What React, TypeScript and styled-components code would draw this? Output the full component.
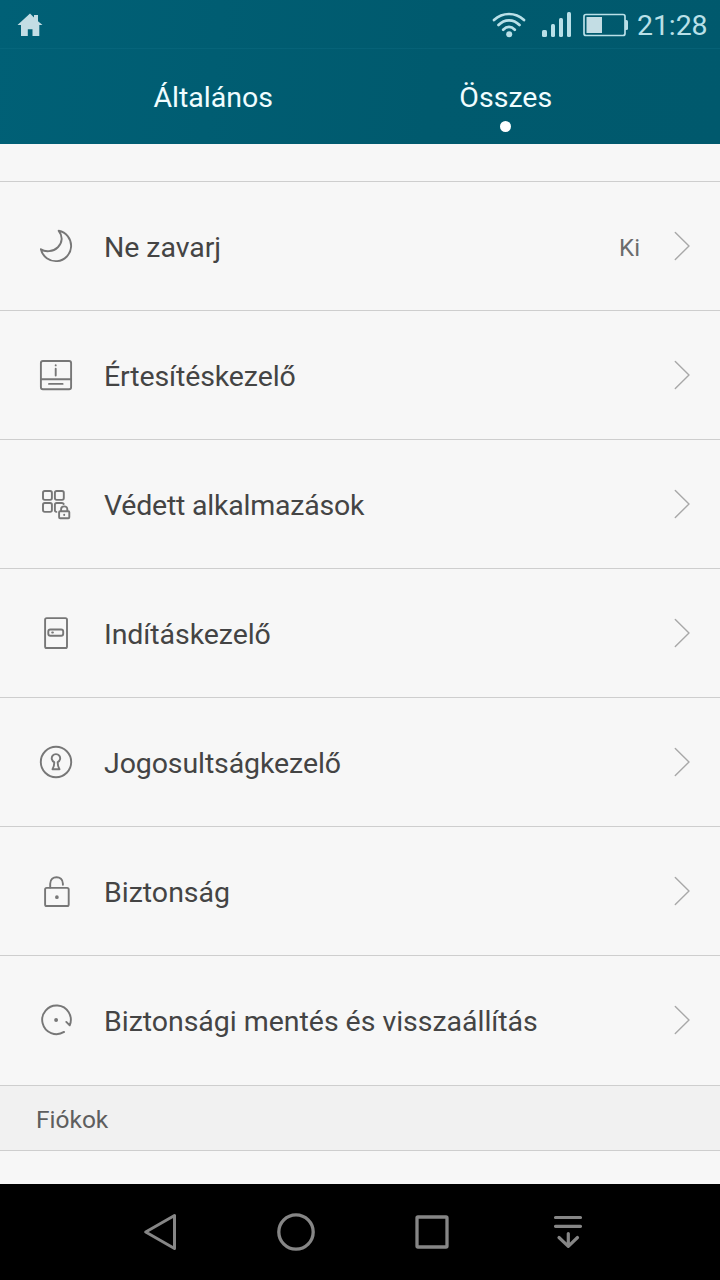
import React from "react";
import styled, { createGlobalStyle } from "styled-components";

const GlobalStyle = createGlobalStyle`
  * { box-sizing: border-box; }
  body { margin: 0; background: #f7f7f7; font-family: Roboto, "Liberation Sans", sans-serif; }
`;

const Screen = styled.div`
  width: 720px;
  height: 1280px;
  display: flex;
  flex-direction: column;
  overflow: hidden;
  background: #f7f7f7;
`;

const Header = styled.header`
  height: 144px;
  flex: none;
  background: linear-gradient(97deg, #006076 0%, #005a6e 60%, #00596d 100%);
`;

const StatusBar = styled.div`
  height: 49px;
  display: flex;
  align-items: center;
  justify-content: space-between;
  padding: 1px 12px 0 17px;
  border-bottom: 1px solid rgba(20, 115, 138, 0.3);
  color: #b9e0e8;
`;

const StatusIcons = styled.div`
  display: flex;
  align-items: center;
`;

const Clock = styled.span`
  width: 71px;
  margin-left: 8px;
  font-size: 28.5px;
  line-height: 34px;
  letter-spacing: -0.1px;
  white-space: nowrap;
  padding-top: 2px;
`;

const Tabs = styled.nav`
  height: 95px;
  display: flex;
  padding: 0 68px;
`;

const Tab = styled.div<{ $shift: number }>`
  flex: 1;
  display: flex;
  flex-direction: column;
  align-items: center;
  padding-top: 32px;
  margin-left: ${(p) => p.$shift}px;
  color: #f0fdff;
`;

const TabLabel = styled.span`
  font-size: 28.5px;
  line-height: 34px;
`;

const Dot = styled.i`
  width: 11px;
  height: 11px;
  margin-top: 6px;
  border-radius: 50%;
  background: #fff;
`;

const List = styled.main`
  flex: 1;
  padding-top: 37px;
`;

const Row = styled.div<{ $extra?: number }>`
  height: ${(p) => 129 + (p.$extra ?? 0)}px;
  border-top: 1px solid #cecece;
  display: flex;
  align-items: center;
  padding: 0 30px ${(p) => p.$extra ?? 0}px 36px;
`;

const Label = styled.span<{ $spacing: number }>`
  flex: 1;
  margin-left: 28px;
  padding-top: 3px;
  font-size: 28.5px;
  line-height: 34px;
  letter-spacing: ${(p) => p.$spacing}px;
  color: #444;
`;

const Value = styled.span`
  margin-right: 34px;
  padding-top: 4px;
  font-size: 24px;
  line-height: 30px;
  color: #6c6c6c;
`;

const SectionTitle = styled.div`
  height: 66px;
  display: flex;
  align-items: center;
  padding: 2px 36px 0;
  border-top: 1px solid #cecece;
  border-bottom: 1px solid #cecece;
  background: #f1f1f1;
  color: #5e5e5e;
  font-size: 24.5px;
`;

const NavBar = styled.footer`
  height: 96px;
  flex: none;
  display: flex;
  align-items: center;
  justify-content: center;
  gap: 88px;
  padding-left: 8px;
  background: #000;
`;

const Glyph = styled.svg`
  display: block;
  flex: none;
  fill: none;
  stroke: #777;
  stroke-width: 1.9;
  stroke-linecap: round;
  stroke-linejoin: round;
`;

const ChevronGlyph = styled(Glyph)`
  stroke: #a8a8a8;
  stroke-width: 1.4;
`;

const NavGlyph = styled(Glyph)`
  stroke: #868686;
  stroke-width: 3.3;
`;

const StatusGlyph = styled(Glyph)`
  stroke: #b9e0e8;
`;

const SignalGlyph = styled.svg`
  margin-left: 16px;
  fill: #b9e0e8;
`;

const BatteryGlyph = styled.svg`
  margin-left: 11px;
`;

const icons = {
  moon: <path d="M22.7 4.8A15.3 15.3 0 1 1 4.9 23.2C9 26.2 17 26 21.900 21.200C26.500 16.700 27 10 22.700 4.800Z" />,
  notice: (
    <>
      <rect x="4.900" y="6" width="30.200" height="28.200" rx="2" />
      <path d="M5 24.300H35M13 28.900H26.600M19.700 13.800V20.600M19.700 10.300V10.400" />
    </>
  ),
  apps: (
    <>
      <rect x="7" y="7" width="8.900" height="8.900" rx="1.800" />
      <rect x="18.900" y="7" width="8.900" height="8.900" rx="1.800" />
      <rect x="7" y="19" width="8.900" height="8.900" rx="1.800" />
      <path d="M20.400 27.900Q18.900 27.900 18.900 26.100V20.800Q18.900 19 20.700 19H26Q27.200 19 27.700 20" />
      <rect x="23.100" y="27.300" width="10.200" height="7" rx="1" />
      <path d="M25.100 27V25.200Q25.100 22.400 28.200 22.400T31.300 25.200V27M28.200 30.600V31" />
    </>
  ),
  startup: (
    <>
      <rect x="9.100" y="5.100" width="21.900" height="29.900" rx="1.600" />
      <rect x="12.300" y="16.500" width="14.900" height="6.300" rx="2" />
      <path d="M16.200 19.600H16.900" strokeWidth="2" />
    </>
  ),
  keyhole: (
    <>
      <circle cx="20" cy="20" r="15.200" />
      <path d="M18.200 20.100A4.200 4.200 0 1 1 21.700 20.100Q21.500 24 23.500 27.200H16.500Q18.500 24 18.200 20.100Z" />
    </>
  ),
  lock: (
    <>
      <rect x="9.100" y="16.900" width="23.600" height="18.100" rx="1.600" />
      <path d="M14.200 16.500V12.700C14.200 4 26.900 4 26.900 12.700V13.700" />
      <circle cx="20.900" cy="26.200" r="0.900" fill="#777" />
    </>
  ),
  backup: (
    <>
      <path d="M28.100 31.900A14.300 14.300 0 1 1 33.700 25.300L30.300 21.900M33.700 25.300L34.600 22.800" />
      <circle cx="20.100" cy="20" r="1" fill="#777" />
    </>
  ),
};

type Item = { icon: keyof typeof icons; label: string; spacing: number; value?: string; extra?: number };

const items: Item[] = [
  { icon: "moon", label: "Ne zavarj", spacing: -0.05, value: "Ki" },
  { icon: "notice", label: "Értesítéskezelő", spacing: -0.12 },
  { icon: "apps", label: "Védett alkalmazások", spacing: -0.22 },
  { icon: "startup", label: "Indításkezelő", spacing: -0.07 },
  { icon: "keyhole", label: "Jogosultságkezelő", spacing: -0.1 },
  { icon: "lock", label: "Biztonság", spacing: 0 },
  { icon: "backup", label: "Biztonsági mentés és visszaállítás", spacing: -0.03, extra: 1 },
];

const Chevron = () => (
  <ChevronGlyph width="16" height="30" viewBox="0 0 16 30">
    <path d="M1.300 1.500L15 15L1.300 28.500" />
  </ChevronGlyph>
);

export default function App() {
  return (
    <>
      <GlobalStyle />
      <Screen>
        <Header>
          <StatusBar>
            <svg width="26" height="24" viewBox="0 0 26 24" fill="#c3dde4">
              <path d="M13 .5L17 4.400V2H21V8.200L25.500 12H22.300V23H15.500V16.300H10.800V23H4V12H.5Z" />
            </svg>
            <StatusIcons>
              <StatusGlyph width="34" height="28" viewBox="0 0 34 28">
                <g strokeWidth="2.700">
                  <path d="M2 9Q8.500 3 17 3T32 9M6.500 14Q11 9.300 17 9.300T27.500 14M11.200 18.700Q14 15.900 17 15.900T22.800 18.700" />
                </g>
                <circle cx="17.200" cy="23.300" r="3" fill="#b9e0e8" stroke="none" />
              </StatusGlyph>
              <SignalGlyph width="30" height="26" viewBox="0 0 30 26">
                <rect x="0" y="18" width="5" height="7" rx="1.500" />
                <rect x="9" y="12" width="4" height="13" rx="1.500" />
                <rect x="17" y="6" width="4" height="19" rx="1.500" />
                <rect x="25" y="0" width="4" height="25" rx="1.500" />
              </SignalGlyph>
              <BatteryGlyph width="46" height="24" viewBox="0 0 46 24">
                <rect x="1" y="1.500" width="41" height="21" rx="2" fill="none" stroke="#b9e0e8" strokeWidth="1.700" />
                <rect x="3.500" y="4" width="15.500" height="16" fill="#c3dde4" />
                <path d="M42 7H43.500Q45 7 45 8.500V15.500Q45 17 43.500 17H42Z" fill="#b9e0e8" />
              </BatteryGlyph>
              <Clock>21:28</Clock>
            </StatusIcons>
          </StatusBar>
          <Tabs>
            <Tab $shift={-1}>
              <TabLabel>Általános</TabLabel>
            </Tab>
            <Tab $shift={0}>
              <TabLabel>Összes</TabLabel>
              <Dot />
            </Tab>
          </Tabs>
        </Header>
        <List>
          {items.map((item) => (
            <Row key={item.label} $extra={item.extra}>
              <Glyph width="40" height="40" viewBox="0 0 40 40">
                {icons[item.icon]}
              </Glyph>
              <Label $spacing={item.spacing}>{item.label}</Label>
              {item.value && <Value>{item.value}</Value>}
              <Chevron />
            </Row>
          ))}
          <SectionTitle>Fiókok</SectionTitle>
        </List>
        <NavBar>
          <NavGlyph width="48" height="48" viewBox="0 0 48 48">
            <path d="M38.500 7.500V40.500L9.700 24Z" strokeWidth="3" />
          </NavGlyph>
          <NavGlyph width="48" height="48" viewBox="0 0 48 48">
            <circle cx="24" cy="24" r="17.200" />
          </NavGlyph>
          <NavGlyph width="48" height="48" viewBox="0 0 48 48">
            <rect x="9" y="9" width="30" height="30" rx="1" />
          </NavGlyph>
          <NavGlyph width="48" height="48" viewBox="0 0 48 48">
            <path d="M11.500 9.500H36.500M11.500 18.300H36.500M24.300 25.500V38M15 29.500L24.300 38.300L33.500 29.500" strokeWidth="3.200" />
          </NavGlyph>
        </NavBar>
      </Screen>
    </>
  );
}
